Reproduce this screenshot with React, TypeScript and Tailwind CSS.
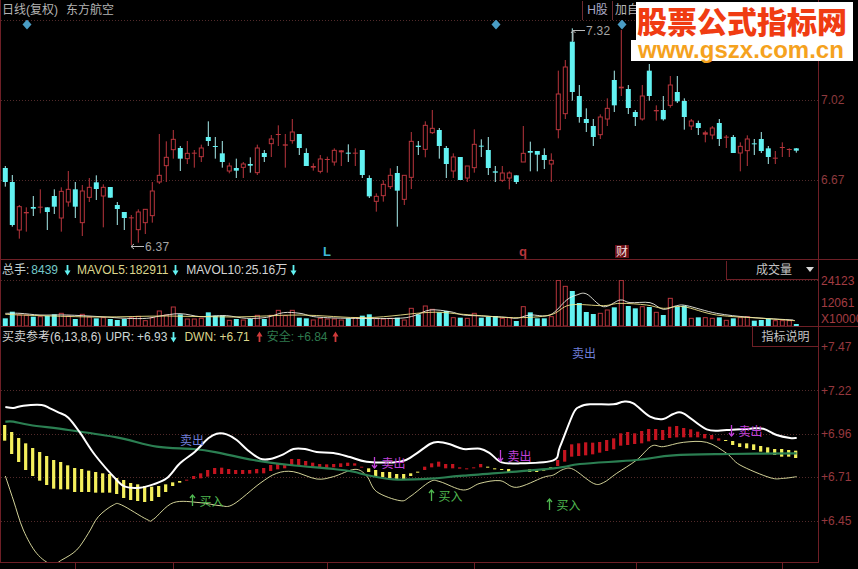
import React from 'react';

// all chart numbers are in "zoom" units (3x the page pixels)
type Candle = [number, number, number, number, number];

// hi, bodyTop, bodyBottom, lo, up (1 = hollow red, 0 = cyan)
const candles: Candle[] = [
  [498, 504, 546, 560, 0], [525, 546, 675, 680, 0], [615, 620, 690, 716, 1], [622, 636, 640, 695, 1],
  [588, 621, 626, 648, 0], [568, 620, 623, 640, 1], [622, 622, 636, 690, 0], [568, 588, 620, 642, 0],
  [562, 574, 654, 695, 1], [513, 568, 606, 620, 1], [546, 568, 620, 654, 0], [555, 573, 668, 708, 1],
  [534, 562, 592, 606, 1], [526, 547, 567, 600, 0], [553, 562, 588, 682, 1], [561, 561, 593, 593, 0],
  [606, 615, 627, 675, 0], [636, 636, 654, 690, 0], [645, 652, 655, 735, 1], [628, 636, 689, 728, 1],
  [627, 628, 668, 702, 1], [546, 573, 647, 668, 1], [402, 526, 546, 552, 1], [424, 472, 497, 546, 1],
  [390, 418, 449, 476, 1], [438, 444, 476, 513, 0], [423, 460, 476, 492, 1], [450, 458, 461, 503, 1],
  [434, 444, 470, 486, 1], [364, 411, 423, 438, 0], [411, 438, 441, 476, 0], [423, 460, 486, 503, 0],
  [488, 498, 513, 520, 1], [476, 504, 512, 534, 0], [486, 492, 502, 534, 1], [472, 492, 497, 518, 0],
  [434, 444, 518, 525, 1], [450, 459, 471, 486, 0], [405, 417, 431, 471, 1], [376, 402, 405, 438, 1],
  [402, 433, 437, 503, 1], [357, 396, 422, 431, 1], [402, 402, 444, 465, 0], [445, 459, 498, 498, 0],
  [490, 498, 503, 512, 1], [465, 477, 514, 520, 1], [470, 477, 480, 518, 1], [445, 451, 486, 497, 1],
  [450, 451, 457, 498, 1], [433, 458, 461, 486, 0], [445, 458, 461, 498, 1], [450, 450, 525, 534, 0],
  [526, 534, 589, 594, 0], [580, 589, 604, 635, 1], [541, 553, 587, 605, 1], [505, 526, 560, 567, 1],
  [498, 519, 572, 680, 0], [526, 526, 598, 615, 1], [396, 424, 532, 567, 1], [423, 437, 441, 465, 0],
  [364, 376, 448, 472, 1], [330, 385, 398, 402, 1], [384, 390, 438, 476, 0], [438, 444, 492, 534, 0],
  [460, 471, 513, 534, 1], [471, 471, 540, 540, 0], [498, 498, 534, 546, 1], [388, 433, 503, 518, 1],
  [418, 437, 440, 471, 0], [411, 450, 504, 525, 0], [498, 514, 518, 546, 0], [498, 519, 541, 546, 1],
  [514, 519, 534, 568, 1], [526, 526, 546, 552, 0], [378, 460, 486, 486, 1], [425, 453, 458, 514, 0],
  [453, 453, 464, 514, 0], [445, 465, 480, 507, 0], [460, 481, 492, 546, 1], [212, 282, 389, 415, 1],
  [180, 201, 341, 357, 1], [85, 125, 276, 302, 0], [255, 288, 351, 368, 0], [325, 357, 369, 396, 0],
  [357, 378, 411, 438, 0], [343, 351, 404, 417, 1], [295, 325, 357, 378, 1], [212, 240, 316, 336, 0],
  [90, 260, 265, 288, 1], [255, 267, 324, 342, 0], [330, 336, 351, 378, 0], [255, 288, 357, 362, 1],
  [192, 212, 288, 302, 0], [316, 330, 334, 362, 1], [288, 330, 358, 362, 0], [228, 255, 316, 323, 1],
  [228, 276, 304, 309, 0], [295, 303, 351, 389, 0], [357, 363, 378, 390, 1], [362, 369, 384, 405, 0],
  [392, 397, 404, 427, 1], [378, 384, 405, 418, 1], [357, 369, 417, 438, 0], [405, 410, 413, 444, 1],
  [405, 411, 459, 459, 0], [427, 439, 459, 514, 1], [406, 417, 452, 498, 1], [417, 430, 433, 465, 0],
  [396, 417, 453, 459, 0], [438, 445, 471, 492, 0], [453, 473, 476, 492, 1], [427, 441, 444, 471, 1],
  [445, 447, 449, 471, 1], [444, 445, 452, 458, 0],
];

// top of each volume bar, same index as candles
const volTops = [
  190, 170, 180, 180, 185, 185, 183, 178, 175, 183, 192, 178, 186, 190, 188, 192, 195, 192, 188, 184,
  197, 188, 168, 180, 156, 178, 192, 192, 190, 172, 182, 182, 196, 192, 195, 192, 181, 192, 181, 166,
  182, 166, 188, 190, 195, 190, 192, 192, 195, 190, 188, 182, 178, 190, 192, 190, 188, 195, 160, 178,
  153, 163, 172, 168, 188, 188, 190, 175, 188, 185, 183, 190, 188, 198, 155, 172, 190, 190, 185, 76,
  94, 108, 144, 171, 177, 175, 165, 157, 76, 153, 160, 155, 156, 172, 180, 130, 155, 152, 190, 187,
  188, 190, 187, 196, 190, 188, 185, 197, 195, 192, 197, 197, 197, 207,
];

const ma5: number[][] = [
  [16, 175], [60, 175], [120, 180], [200, 180], [300, 185], [380, 190], [440, 190], [480, 183], [540, 176],
  [600, 185], [640, 183], [680, 182], [740, 190], [800, 187], [850, 173], [900, 175], [950, 186], [1050, 190],
  [1190, 190], [1240, 183], [1290, 165], [1350, 170], [1390, 180], [1450, 183], [1520, 187], [1550, 190],
  [1590, 180], [1650, 180], [1700, 135], [1730, 120], [1760, 117], [1810, 155], [1860, 135], [1890, 143],
  [1950, 143], [1990, 163], [2030, 152], [2060, 152], [2150, 175], [2250, 187], [2380, 195],
];
const ma10: number[][] = [
  [16, 178], [120, 182], [300, 186], [500, 183], [700, 186], [900, 180], [1100, 188], [1290, 172], [1390, 178],
  [1540, 188], [1650, 180], [1710, 150], [1810, 152], [1860, 145], [1940, 150], [1990, 160], [2050, 155],
  [2150, 180], [2290, 190], [2385, 197],
];

const upr: number[][] = [
  [16, 171], [40, 174], [70, 167], [125, 165], [150, 175], [175, 187], [205, 203], [240, 248], [285, 315], [350, 390],
  [375, 410], [420, 413], [460, 403], [500, 385], [540, 340], [585, 305], [625, 265], [650, 251], [680, 253], [710, 270],
  [745, 302], [780, 326], [810, 327], [850, 313], [880, 297], [915, 297], [950, 306], [1000, 309], [1050, 321], [1100, 335],
  [1200, 335], [1240, 317], [1290, 282], [1315, 276], [1350, 283], [1390, 297], [1440, 296], [1470, 310], [1505, 337],
  [1560, 340], [1660, 331], [1680, 290], [1720, 190], [1740, 170], [1770, 163], [1840, 163], [1870, 155], [1900, 160],
  [1950, 200], [1990, 207], [2020, 192], [2050, 190], [2120, 238], [2180, 240], [2250, 236], [2290, 236], [2330, 255],
  [2370, 264], [2390, 264],
];
const safe: number[][] = [
  [16, 215], [40, 215], [90, 225], [205, 240], [350, 262], [470, 290], [580, 297], [650, 307], [760, 330], [870, 345],
  [1000, 357], [1060, 365], [1100, 375], [1180, 388], [1290, 386], [1390, 377], [1660, 355], [1740, 342], [1910, 330],
  [2020, 316], [2190, 312], [2390, 310],
];
const dwn: number[][] = [
  [16, 378], [40, 450], [70, 540], [110, 610], [155, 643], [185, 630], [230, 600], [265, 550], [295, 500], [340, 465],
  [365, 465], [440, 508], [460, 508], [520, 458], [600, 458], [660, 467], [700, 463], [780, 400], [830, 370], [880, 365],
  [950, 387], [1000, 380], [1065, 358], [1100, 378], [1130, 425], [1200, 452], [1230, 440], [1290, 395], [1320, 395],
  [1390, 420], [1440, 400], [1500, 392], [1550, 412], [1630, 382], [1660, 375], [1690, 358], [1720, 358], [1780, 400],
  [1810, 398], [1850, 370], [1910, 330], [1955, 288], [1990, 290], [2050, 277], [2120, 277], [2180, 310], [2220, 345],
  [2310, 383], [2350, 385], [2390, 380],
];

// histogram: top, bottom, colour key (y yellow, r red)
const hist: [number, number, 'y' | 'r'][] = [
  [225, 272, 'y'], [246, 312, 'y'], [264, 336, 'y'], [280, 360, 'y'], [294, 378, 'y'], [306, 392, 'y'], [318, 405, 'y'],
  [330, 416, 'y'], [336, 418, 'y'], [346, 418, 'y'], [354, 426, 'y'], [357, 426, 'y'], [362, 426, 'y'], [366, 428, 'y'],
  [370, 428, 'y'], [372, 428, 'y'], [384, 432, 'y'], [390, 444, 'y'], [399, 450, 'y'], [403, 453, 'y'], [408, 456, 'y'],
  [410, 453, 'y'], [408, 441, 'y'], [403, 426, 'y'], [397, 408, 'y'], [393, 398, 'y'], [389, 392, 'r'], [378, 387, 'r'],
  [370, 385, 'r'], [360, 380, 'r'], [354, 372, 'r'], [353, 372, 'r'], [357, 372, 'r'], [360, 372, 'r'], [360, 372, 'r'],
  [360, 371, 'r'], [357, 370, 'r'], [354, 370, 'r'], [345, 363, 'r'], [342, 358, 'r'], [342, 355, 'r'], [327, 345, 'r'],
  [327, 345, 'r'], [333, 347, 'r'], [338, 350, 'r'], [342, 354, 'r'], [343, 354, 'r'], [342, 352, 'r'], [340, 351, 'r'],
  [338, 348, 'r'], [340, 347, 'r'], [350, 353, 'r'], [355, 366, 'y'], [360, 379, 'y'], [366, 382, 'y'], [366, 385, 'y'],
  [372, 387, 'y'], [372, 387, 'y'], [370, 378, 'y'], [365, 368, 'y'], [350, 360, 'r'], [340, 352, 'r'], [335, 350, 'r'],
  [342, 355, 'r'], [342, 355, 'r'], [352, 356, 'r'], [355, 358, 'r'], [352, 355, 'r'], [342, 352, 'r'], [350, 353, 'y'],
  [355, 358, 'y'], [357, 360, 'y'], [357, 366, 'y'], [363, 366, 'y'], [362, 366, 'y'], [358, 366, 'y'], [358, 366, 'y'],
  [358, 362, 'y'], [352, 355, 'y'], [330, 348, 'r'], [300, 335, 'r'], [283, 320, 'r'], [280, 318, 'r'], [277, 316, 'r'],
  [278, 313, 'r'], [276, 308, 'r'], [270, 303, 'r'], [265, 298, 'r'], [250, 287, 'r'], [246, 285, 'r'], [250, 282, 'r'],
  [243, 280, 'r'], [237, 274, 'r'], [237, 270, 'r'], [240, 270, 'r'], [230, 264, 'r'], [228, 262, 'r'], [234, 262, 'r'],
  [238, 262, 'r'], [245, 262, 'r'], [252, 265, 'r'], [255, 268, 'r'], [265, 272, 'r'], [270, 273, 'y'], [273, 285, 'y'],
  [280, 291, 'y'], [280, 295, 'y'], [283, 300, 'y'], [288, 305, 'y'], [292, 310, 'y'], [297, 315, 'y'], [297, 320, 'y'],
  [300, 320, 'y'], [302, 324, 'y'],
];

const CYAN = '#62f2f2';
const RED = '#b8353c';
const GRID = '#522a2a';

const xAt = (i: number) => 5.3 + i * 7;

// catmull-rom through the points, dy is where zoom y=0 sits on the page
const smooth = (pts: number[][], dy: number) => {
  const p = pts.map(([x, y]) => [x / 3, y / 3 + dy]);
  let d = `M${p[0][0]} ${p[0][1]}`;
  for (let i = 0; i < p.length - 1; i++) {
    const a = p[Math.max(i - 1, 0)];
    const b = p[i];
    const c = p[i + 1];
    const e = p[Math.min(i + 2, p.length - 1)];
    d += ` C${b[0] + (c[0] - a[0]) / 6} ${b[1] + (c[1] - a[1]) / 6} ${c[0] - (e[0] - b[0]) / 6} ${c[1] - (e[1] - b[1]) / 6} ${c[0]} ${c[1]}`;
  }
  return d;
};

const Arrow: React.FC<{ color: string; up?: boolean }> = ({ color, up }) => (
  <svg width="7" height="12" viewBox="0 0 7 12" className="shrink-0">
    <g transform={up ? 'rotate(180 3.5 6)' : undefined}>
      <path d="M3.5 1V8" stroke={color} strokeWidth="1.8" />
      <path d="M0.5 6.5H6.5L3.5 11.5Z" fill={color} />
    </g>
  </svg>
);

const Signal: React.FC<{ x: number; y: number; label: string; color: string; up?: boolean; arrow?: boolean }> = ({ x, y, label, color, up, arrow = true }) => (
  <g>
    {arrow && (
      <g stroke={color} strokeWidth="1.3" fill="none">
        <path d={`M${x + 2.5} ${y - 6}V${y + 5}`} />
        <path d={up ? `M${x} ${y - 3}L${x + 2.5} ${y - 6}L${x + 5} ${y - 3}` : `M${x} ${y + 2}L${x + 2.5} ${y + 5}L${x + 5} ${y + 2}`} />
      </g>
    )}
    <text x={arrow ? x + 9.5 : x} y={y + 4.5} fontSize="12" fill={color}>{label}</text>
  </g>
);

const Dotted: React.FC<{ y: number }> = ({ y }) => (
  <line x1="1" x2="818" y1={y} y2={y} stroke={GRID} strokeWidth="1" strokeDasharray="1 2" />
);

const PriceChart = () => (
  <svg viewBox="1 20 817 239" className="block h-[239px] w-[817px]">
    <Dotted y={20.5} />
    <Dotted y={100.5} />
    <Dotted y={180.5} />
    {[27, 496, 622].map((x) => (
      <path key={x} d={`M${x} 19.5L${x + 4.5} 24.5L${x} 29.5L${x - 4.5} 24.5Z`} fill="#4a9cc4" />
    ))}
    {candles.map(([hi, top, bot, lo, up], i) => {
      const x = xAt(i);
      const color = up ? RED : CYAN;
      return (
        <g key={i}>
          <line x1={x} x2={x} y1={hi / 3} y2={lo / 3} stroke={up ? '#b8353c' : '#a8eeee'} strokeWidth="1" />
          {bot - top < 8 ? (
            <rect x={x - 2.5} y={top / 3} width="5" height={Math.max((bot - top) / 3, 1)} fill={color} />
          ) : up ? (
            <rect x={x - 2} y={top / 3} width="4" height={(bot - top) / 3} fill="#000" stroke={color} strokeWidth="1" />
          ) : (
            <rect x={x - 2.5} y={top / 3} width="5" height={(bot - top) / 3} fill={color} />
          )}
        </g>
      );
    })}
    <g stroke="#bdbdbd" strokeWidth="1" fill="none">
      <path d="M131 246.5H144M134 244L131 246.5L134 249" />
      <path d="M585 30.5H573V41M571 33L573 30.5L575.5 33" />
    </g>
    <text x="145" y="251" fontSize="12" fill="#a5a5a5" letterSpacing="0.3">6.37</text>
    <text x="586" y="35" fontSize="12" fill="#a5a5a5" letterSpacing="0.3">7.32</text>
    <text x="323" y="256" fontSize="13" fontWeight="700" fill="#3fb6d6">L</text>
    <text x="519" y="256" fontSize="13" fontWeight="700" fill="#b8353c">q</text>
    <rect x="615" y="245" width="14" height="13" fill="#6a1016" />
    <text x="616" y="256" fontSize="12" fill="#f0dede">财</text>
  </svg>
);

const VolumeChart = () => (
  <svg viewBox="1 280 817 46" className="block h-[46px] w-[817px]">
    <Dotted y={280.5} />
    {volTops.map((t, i) => {
      const x = xAt(i);
      const y = 255 + t / 3;
      return candles[i][4] ? (
        <rect key={i} x={x - 2} y={y} width="4" height={326 - y} fill="none" stroke={RED} strokeWidth="1" />
      ) : (
        <rect key={i} x={x - 2.5} y={y} width="5" height={326 - y} fill={CYAN} />
      );
    })}
    <path d={smooth(ma5, 255)} fill="none" stroke="#f2f2e6" strokeWidth="0.9" />
    <path d={smooth(ma10, 255)} fill="none" stroke="#efe48a" strokeWidth="0.9" />
  </svg>
);

const SignalChart = () => (
  <svg viewBox="1 347 817 215" className="block h-[215px] w-[817px]">
    {[390.5, 434.5, 477.5, 521.5].map((y) => (
      <Dotted key={y} y={y} />
    ))}
    {hist.map(([t, b, c], i) => (
      <rect key={i} x={(14 + i * 21) / 3 - 1.6} y={350 + t / 3} width="3.2" height={(b - t) / 3} fill={c === 'y' ? '#f4ef5c' : '#c4141f'} />
    ))}
    <path d={smooth(dwn, 350)} fill="none" stroke="#e9e9a8" strokeWidth="0.9" />
    <path d={smooth(safe, 350)} fill="none" stroke="#2b7f52" strokeWidth="2.2" />
    <path d={smooth(upr, 350)} fill="none" stroke="#fff" strokeWidth="2" />
    <Signal x={180} y={440} label="卖出" color="#6f7fd8" arrow={false} />
    <Signal x={572} y={353} label="卖出" color="#6f7fd8" arrow={false} />
    <Signal x={372} y={463} label="卖出" color="#c040d8" />
    <Signal x={498} y={456} label="卖出" color="#c040d8" />
    <Signal x={729} y={431} label="卖出" color="#c040d8" />
    <Signal x={190} y={501} label="买入" color="#4fb850" up />
    <Signal x={429} y={496} label="买入" color="#4fb850" up />
    <Signal x={547} y={505} label="买入" color="#4fb850" up />
  </svg>
);

const App: React.FC = () => {
  return (
    <div className="relative flex h-[569px] w-[858px] flex-col overflow-hidden bg-black font-['Liberation_Sans','Noto_Sans_CJK_SC',sans-serif] text-xs">
      {/* price */}
      <div className="flex h-[260px] shrink-0">
        <div className="w-[819px] shrink-0 border-x border-b border-[#6e1f26]">
          <div className="flex h-5 items-center leading-5 text-[#b4b4b4]">
            <span className="w-[581px] shrink-0 pl-px">
              日线(复权)<span className="ml-2">东方航空</span>
            </span>
            <span className="h-[19px] w-[31px] shrink-0 border-x border-[#6e2a30] text-center leading-[18px] text-[#a9a9c4]">H股</span>
            <span className="pl-[2px]">加自</span>
          </div>
          <PriceChart />
        </div>
        <div className="flex-1 border-b border-[#6e1f26] pl-[2px] pt-[92px] leading-4 text-[#8e3a3e]">
          <div>7.02</div>
          <div className="mt-16">6.67</div>
        </div>
      </div>

      {/* volume */}
      <div className="flex h-[67px] shrink-0">
        <div className="w-[819px] shrink-0 border-x border-b border-[#6e1f26]">
          <div className="flex h-5 items-center whitespace-nowrap leading-5">
            <span className="pl-px text-[#c0d0d0]">总手:</span>
            <span className="ml-[2px] text-[#74c8c8]">8439</span>
            <span className="ml-[6px]"><Arrow color={CYAN} /></span>
            <span className="ml-[6px] text-[#dcd68c]">MAVOL5:</span>
            <span className="ml-px text-[#dcd68c]">182911</span>
            <span className="ml-[4px]"><Arrow color={CYAN} /></span>
            <span className="ml-[7px] text-[#d4d4d4]">MAVOL10:</span>
            <span className="ml-px text-[#d4d4d4]">25.16万</span>
            <span className="ml-[3px]"><Arrow color={CYAN} /></span>
            <div className="ml-auto flex h-[19px] w-[92px] items-center border-b border-l border-[#6e1f26] pl-[29px] text-[#c4c4c4]">
              <span>成交量</span>
              <svg width="8" height="5" viewBox="0 0 8 5" className="ml-[14px]"><path d="M0 0H8L4 5Z" fill="#d8d8d8" /></svg>
            </div>
          </div>
          <VolumeChart />
        </div>
        <div className="flex-1 whitespace-nowrap border-b border-[#6e1f26] pl-[2px] pt-[13px] leading-4 text-[#a33c42]">
          <div>24123</div>
          <div className="mt-[6px]">12061</div>
          <div>X10000</div>
        </div>
      </div>

      {/* signal */}
      <div className="flex h-[236px] shrink-0">
        <div className="w-[819px] shrink-0 border-x border-b border-[#6e1f26]">
          <div className="flex h-5 items-center whitespace-nowrap leading-5">
            <span className="pl-px text-[#d4d4d4]">买卖参考(6,13,8,6)</span>
            <span className="ml-[4px] text-[#c9d6d6]">UPR:</span>
            <span className="ml-[3px] text-[#c9d6d6]">+6.93</span>
            <span className="ml-[3px]"><Arrow color={CYAN} /></span>
            <span className="ml-[7px] text-[#dcd68c]">DWN:</span>
            <span className="ml-[3px] text-[#dcd68c]">+6.71</span>
            <span className="ml-[6px]"><Arrow color="#d03a3a" up /></span>
            <span className="ml-[4px] text-[#2f7a4e]">安全:</span>
            <span className="ml-[3px] text-[#2f7a4e]">+6.84</span>
            <span className="ml-[4px]"><Arrow color="#d03a3a" up /></span>
            <div className="ml-auto h-5 w-[66px] border-b border-l border-[#6e1f26] text-center text-[#c4c4c4]">指标说明</div>
          </div>
          <SignalChart />
        </div>
        <div className="flex-1 pl-[2px] pt-3 leading-4 text-[#96383e]">
          <div>+7.47</div>
          <div className="mt-7">+7.22</div>
          <div className="mt-[27px]">+6.96</div>
          <div className="mt-[27px]">+6.71</div>
          <div className="mt-7">+6.45</div>
        </div>
      </div>

      {/* date ticks under the chart */}
      <div className="flex flex-1">
        <div className="ml-[75px] h-full w-px bg-[#6e1f26]" />
        <div className="ml-[97px] h-full w-px bg-[#6e1f26]" />
        <div className="ml-[153px] h-full w-px bg-[#6e1f26]" />
        <div className="ml-[146px] h-full w-px bg-[#6e1f26]" />
        <div className="ml-[161px] h-full w-px bg-[#6e1f26]" />
        <div className="ml-[145px] h-full w-px bg-[#6e1f26]" />
      </div>

      {/* site watermark */}
      <div className="absolute left-[636px] top-[2px] h-[59px] w-[217px] bg-white">
        <div className="absolute -left-[5px] top-[38px] h-[21px] w-[5px] bg-white" />
        <div className="h-[36px] whitespace-nowrap pl-px font-['Noto_Sans_CJK_SC',sans-serif] text-[30px] font-black leading-[36px] text-[#f03c12]">股票公式指标网</div>
        <div className="whitespace-nowrap pl-[2px] text-2xl font-bold leading-6 text-[#f5a21e]">www.gszx.com.cn</div>
      </div>
    </div>
  );
};

export default App;
